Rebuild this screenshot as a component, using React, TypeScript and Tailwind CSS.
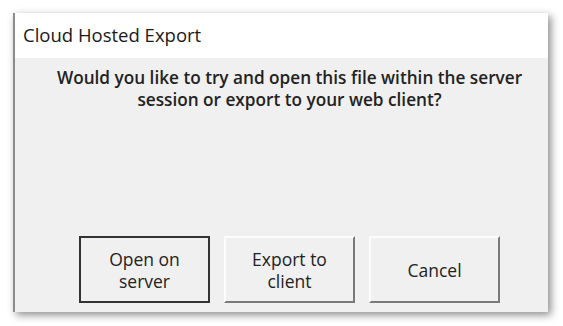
import React from 'react';

const font = { fontFamily: '"Open Sans", "Noto Sans", sans-serif' };

const DialogButton: React.FC<{ label: React.ReactNode; isDefault?: boolean }> = ({ label, isDefault }) => (
  <button
    className={`w-[131px] h-[67px] flex items-center justify-center text-center text-[17.5px] leading-[22px] text-[#222] bg-[#f0f0f0] ${
      isDefault
        ? 'border-2 border-[#333]'
        : 'border-2 border-t-[#fcfcfc] border-l-[#fcfcfc] border-r-[#7a7a7a] border-b-[#7a7a7a]'
    }`}
  >
    <span>{label}</span>
  </button>
);

export default function App() {
  return (
    <div className="w-[563px] h-[326px] bg-white pt-[13px] pl-[13px]" style={font}>
      <div className="w-[535px] h-[299px] flex flex-col border-l-2 border-l-[#8c8c8c] shadow-[3px_3px_8px_rgba(0,0,0,0.45)]">
        {/* Title bar */}
        <div className="h-[45px] bg-white flex items-center pl-[8px] pb-[2px] text-[18.5px] text-[#1a1a1a]">
          Cloud Hosted Export
        </div>

        {/* Body */}
        <div className="flex-1 bg-[#f0f0f0] flex flex-col">
          <p className="pt-[9px] pl-[16px] text-center text-[17.2px] leading-[22px] font-semibold text-[#222]">
            Would you like to try and open this file within the server
            <br />
            session or export to your web client?
          </p>

          <div className="mt-auto flex gap-[14px] pl-[64px] pb-[9px]">
            <DialogButton isDefault label={<>Open on<br />server</>} />
            <DialogButton label={<>Export to<br />client</>} />
            <DialogButton label="Cancel" />
          </div>
        </div>
      </div>
    </div>
  );
}
